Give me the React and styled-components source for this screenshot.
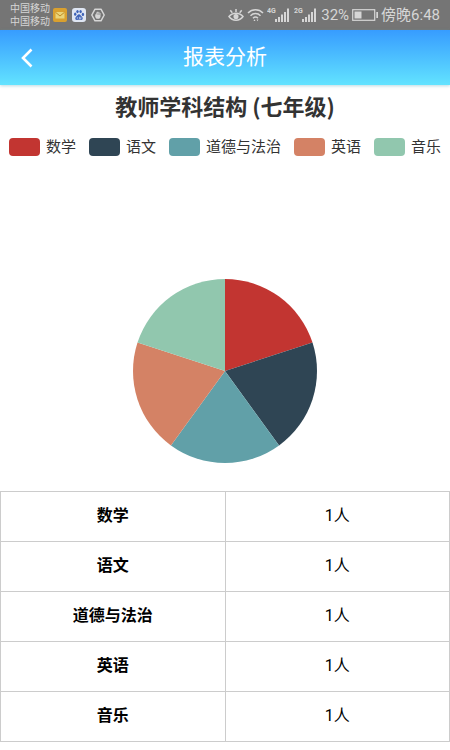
import styled, {createGlobalStyle} from 'styled-components';

const GlobalStyle = createGlobalStyle`
  * {
    box-sizing: border-box;
  }

  body {
    margin: 0;
    background: #ffffff;
    color: #000000;
    font-family: Roboto, 'Noto Sans CJK SC', sans-serif;
  }
`;

const StatusBar = styled.div`
  display: flex;
  align-items: center;
  justify-content: space-between;
  height: 30px;
  padding: 0 10px;
  background: #757575;
  color: #d6d6d6;
`;

const StatusGroup = styled.div`
  display: flex;
  align-items: center;
  gap: ${({$gap}) => $gap}px;

  svg {
    display: block;
    flex: none;
  }
`;

const Carriers = styled.div`
  font-size: 10px;
  line-height: 13px;
`;

const StatusText = styled.span`
  font-size: 15px;
  line-height: 30px;
  white-space: nowrap;
`;

const Header = styled.header`
  display: grid;
  grid-template-columns: 54px 1fr 54px;
  align-items: center;
  height: 55px;
  background: linear-gradient(#379cff, #62e3ff);
  box-shadow: 0 1px 3px rgba(80, 160, 180, 0.4);
`;

const BackButton = styled.button`
  display: flex;
  align-items: center;
  justify-content: center;
  height: 54px;
  padding: 0;
  border: 0;
  background: none;
  cursor: pointer;
`;

const HeaderTitle = styled.h1`
  margin: 0;
  padding-bottom: 2px;
  color: #ffffff;
  font-size: 21px;
  font-weight: 400;
  line-height: 52px;
  text-align: center;
`;

const ChartSection = styled.section`
  display: flex;
  flex-direction: column;
  align-items: center;
  padding: 4px 0 28px;
  color: #333333;
`;

const ChartTitle = styled.h2`
  margin: 0;
  font-family: 'Noto Sans CJK SC', sans-serif;
  font-size: 22px;
  font-weight: 700;
  line-height: 32px;
`;

const Legend = styled.div`
  display: flex;
  flex-wrap: wrap;
  justify-content: center;
  gap: 13px;
  margin: 14px 0 120px;
`;

const LegendItem = styled.button`
  display: flex;
  align-items: center;
  gap: 6px;
  padding: 0;
  border: 0;
  background: none;
  color: #333333;
  font-family: inherit;
  font-size: 15px;
  line-height: 24px;
  cursor: pointer;

  &::before {
    content: '';
    width: 31px;
    height: 18px;
    border-radius: 4px;
    background: ${({$color}) => $color};
  }
`;

const Pie = styled.svg`
  display: block;
  width: 184px;
  height: 184px;
`;

const Table = styled.table`
  width: 100%;
  table-layout: fixed;
  border-collapse: collapse;
  font-size: 16px;
  line-height: 24px;
  text-align: center;

  th,
  td {
    height: 50px;
    padding: 0 0 2px;
    border: 1px solid #cccccc;
  }
`;

const subjects = [
  {name: '数学', count: 1, color: '#c23531'},
  {name: '语文', count: 1, color: '#2f4554'},
  {name: '道德与法治', count: 1, color: '#61a0a8'},
  {name: '英语', count: 1, color: '#d48265'},
  {name: '音乐', count: 1, color: '#91c7ae'},
];

const RADIUS = 92;

const pointAt = (share) => {
  const angle = share * 2 * Math.PI;
  return `${RADIUS + RADIUS * Math.sin(angle)} ${RADIUS - RADIUS * Math.cos(angle)}`;
};

const PieChart = ({data}) => {
  const total = data.reduce((sum, item) => sum + item.count, 0);
  let passed = 0;

  return (
    <Pie viewBox="0 0 184 184" role="img" aria-label="教师学科结构">
      {data.map((item) => {
        const from = passed / total;
        passed += item.count;
        const to = passed / total;
        const large = to - from > 0.5 ? 1 : 0;
        return (
          <path
            key={item.name}
            fill={item.color}
            d={`M${RADIUS} ${RADIUS}L${pointAt(from)}A${RADIUS} ${RADIUS} 0 ${large} 1 ${pointAt(to)}Z`}
          />
        );
      })}
    </Pie>
  );
};

const MailIcon = () => (
  <svg width="14" height="14" viewBox="0 0 14 14">
    <rect width="14" height="14" rx="2" fill="#d9a02f" />
    <rect x="2.5" y="4" width="9" height="6.5" fill="#e9d479" />
    <path d="M2.5 4.3L7 8l4.500-3.700" fill="none" stroke="#c08a22" />
  </svg>
);

const PawIcon = () => (
  <svg width="14" height="14" viewBox="0 0 14 14">
    <rect width="14" height="14" rx="3" fill="#dfe6f3" />
    <g fill="#3d62b8">
      <ellipse cx="3.200" cy="6.200" rx="1.200" ry="1.600" />
      <ellipse cx="5.500" cy="3.600" rx="1.200" ry="1.700" />
      <ellipse cx="8.600" cy="3.600" rx="1.200" ry="1.700" />
      <ellipse cx="10.900" cy="6.400" rx="1.200" ry="1.600" />
      <path d="M7 6.200c1.400 0 1.900 1.500 3 2.500 1.300 1.300.8 3.300-1 3.300-.8 0-1.200-.2-2-.2s-1.200.2-2 .2c-1.800 0-2.300-2-1-3.300 1.100-1 1.600-2.500 3-2.500z" />
    </g>
    <path d="M5.300 9.200v1.600M7.400 8.800v2h1.500v-2" fill="none" stroke="#dfe6f3" strokeWidth=".7" />
  </svg>
);

const HandIcon = () => (
  <svg width="14" height="14" viewBox="0 0 14 14">
    <path d="M4 1.200h6L13.200 7 10 12.800H4L.8 7z" fill="none" stroke="#d6d6d6" strokeWidth="1.500" strokeLinejoin="round" />
    <path d="M4.200 6.500l1-.6V4.500h1V3.700h1.200v.5h1.100v.7h1v4.200L8.300 10.700H5.500L4.200 9z" fill="#d6d6d6" />
    <path d="M6.200 5v2M7.400 4.500v2.500M8.500 5v2" stroke="#757575" strokeWidth=".4" />
  </svg>
);

const EyeIcon = () => (
  <svg width="16" height="14" viewBox="0 0 16 14" fill="none" stroke="#d6d6d6" strokeWidth="1.500">
    <path d="M1 8.500C4.500 4 11.500 4 15 8.500 11.500 13.500 4.500 13.500 1 8.500z" />
    <circle cx="8" cy="8.500" r="1.800" fill="#d6d6d6" />
    <path d="M8 1v3M2.300 2.300l2 2.500M13.700 2.300l-2 2.500" />
  </svg>
);

const WifiIcon = () => (
  <svg width="17" height="14" viewBox="0 0 17 14" fill="none" stroke="#d6d6d6" strokeWidth="1.500">
    <path d="M1 5c4.200-4.200 10.800-4.200 15 0M3.500 7.700c2.800-2.800 7.200-2.800 10 0M6 10.200c1.500-1.400 3.500-1.400 5 0" />
    <path d="M6.500 13l1-1.800 1 1.800zM9.500 11.500h2l-1 1.800z" fill="#d6d6d6" stroke="none" />
  </svg>
);

const SignalIcon = ({label}) => (
  <svg width="24" height="16" viewBox="0 0 24 16" fill="#d6d6d6">
    <text x="0" y="6" fontSize="7" fontWeight="700">{label}</text>
    <path d="M8 12h2v3H8zM11 10h2v5h-2zM14 7.500h2V15h-2zM17 5h2v10h-2zM20 1.500h2V15h-2z" />
  </svg>
);

const BatteryIcon = () => (
  <svg width="26" height="12" viewBox="0 0 26 12">
    <rect x=".7" y=".7" width="22" height="10.600" fill="none" stroke="#d6d6d6" strokeWidth="1.200" />
    <path d="M2.500 2.500H9.500v7h-7zM24.300 3h1.700v6h-1.700z" fill="#d6d6d6" />
  </svg>
);

const App = () => {
  return (
    <>
      <GlobalStyle />
      <StatusBar>
        <StatusGroup $gap={3}>
          <Carriers>
            <div>中国移动</div>
            <div>中国移动</div>
          </Carriers>
          <StatusGroup $gap={5}>
            <MailIcon />
            <PawIcon />
            <HandIcon />
          </StatusGroup>
        </StatusGroup>
        <StatusGroup $gap={3}>
          <EyeIcon />
          <WifiIcon />
          <SignalIcon label="4G" />
          <SignalIcon label="2G" />
          <StatusText>32%</StatusText>
          <BatteryIcon />
          <StatusText>傍晚6:48</StatusText>
        </StatusGroup>
      </StatusBar>
      <Header>
        <BackButton type="button" aria-label="返回">
          <svg width="12" height="20" viewBox="0 0 12 20" fill="none" stroke="#ffffff" strokeWidth="2.600">
            <path d="M10.500 1.500L2 10l8.500 8.500" />
          </svg>
        </BackButton>
        <HeaderTitle>报表分析</HeaderTitle>
      </Header>
      <main>
        <ChartSection>
          <ChartTitle>教师学科结构 (七年级)</ChartTitle>
          <Legend>
            {subjects.map((subject) => (
              <LegendItem key={subject.name} type="button" $color={subject.color}>
                {subject.name}
              </LegendItem>
            ))}
          </Legend>
          <PieChart data={subjects} />
        </ChartSection>
        <Table>
          <tbody>
            {subjects.map((subject) => (
              <tr key={subject.name}>
                <th scope="row">{subject.name}</th>
                <td>{subject.count}人</td>
              </tr>
            ))}
          </tbody>
        </Table>
      </main>
    </>
  );
};

export default App;
